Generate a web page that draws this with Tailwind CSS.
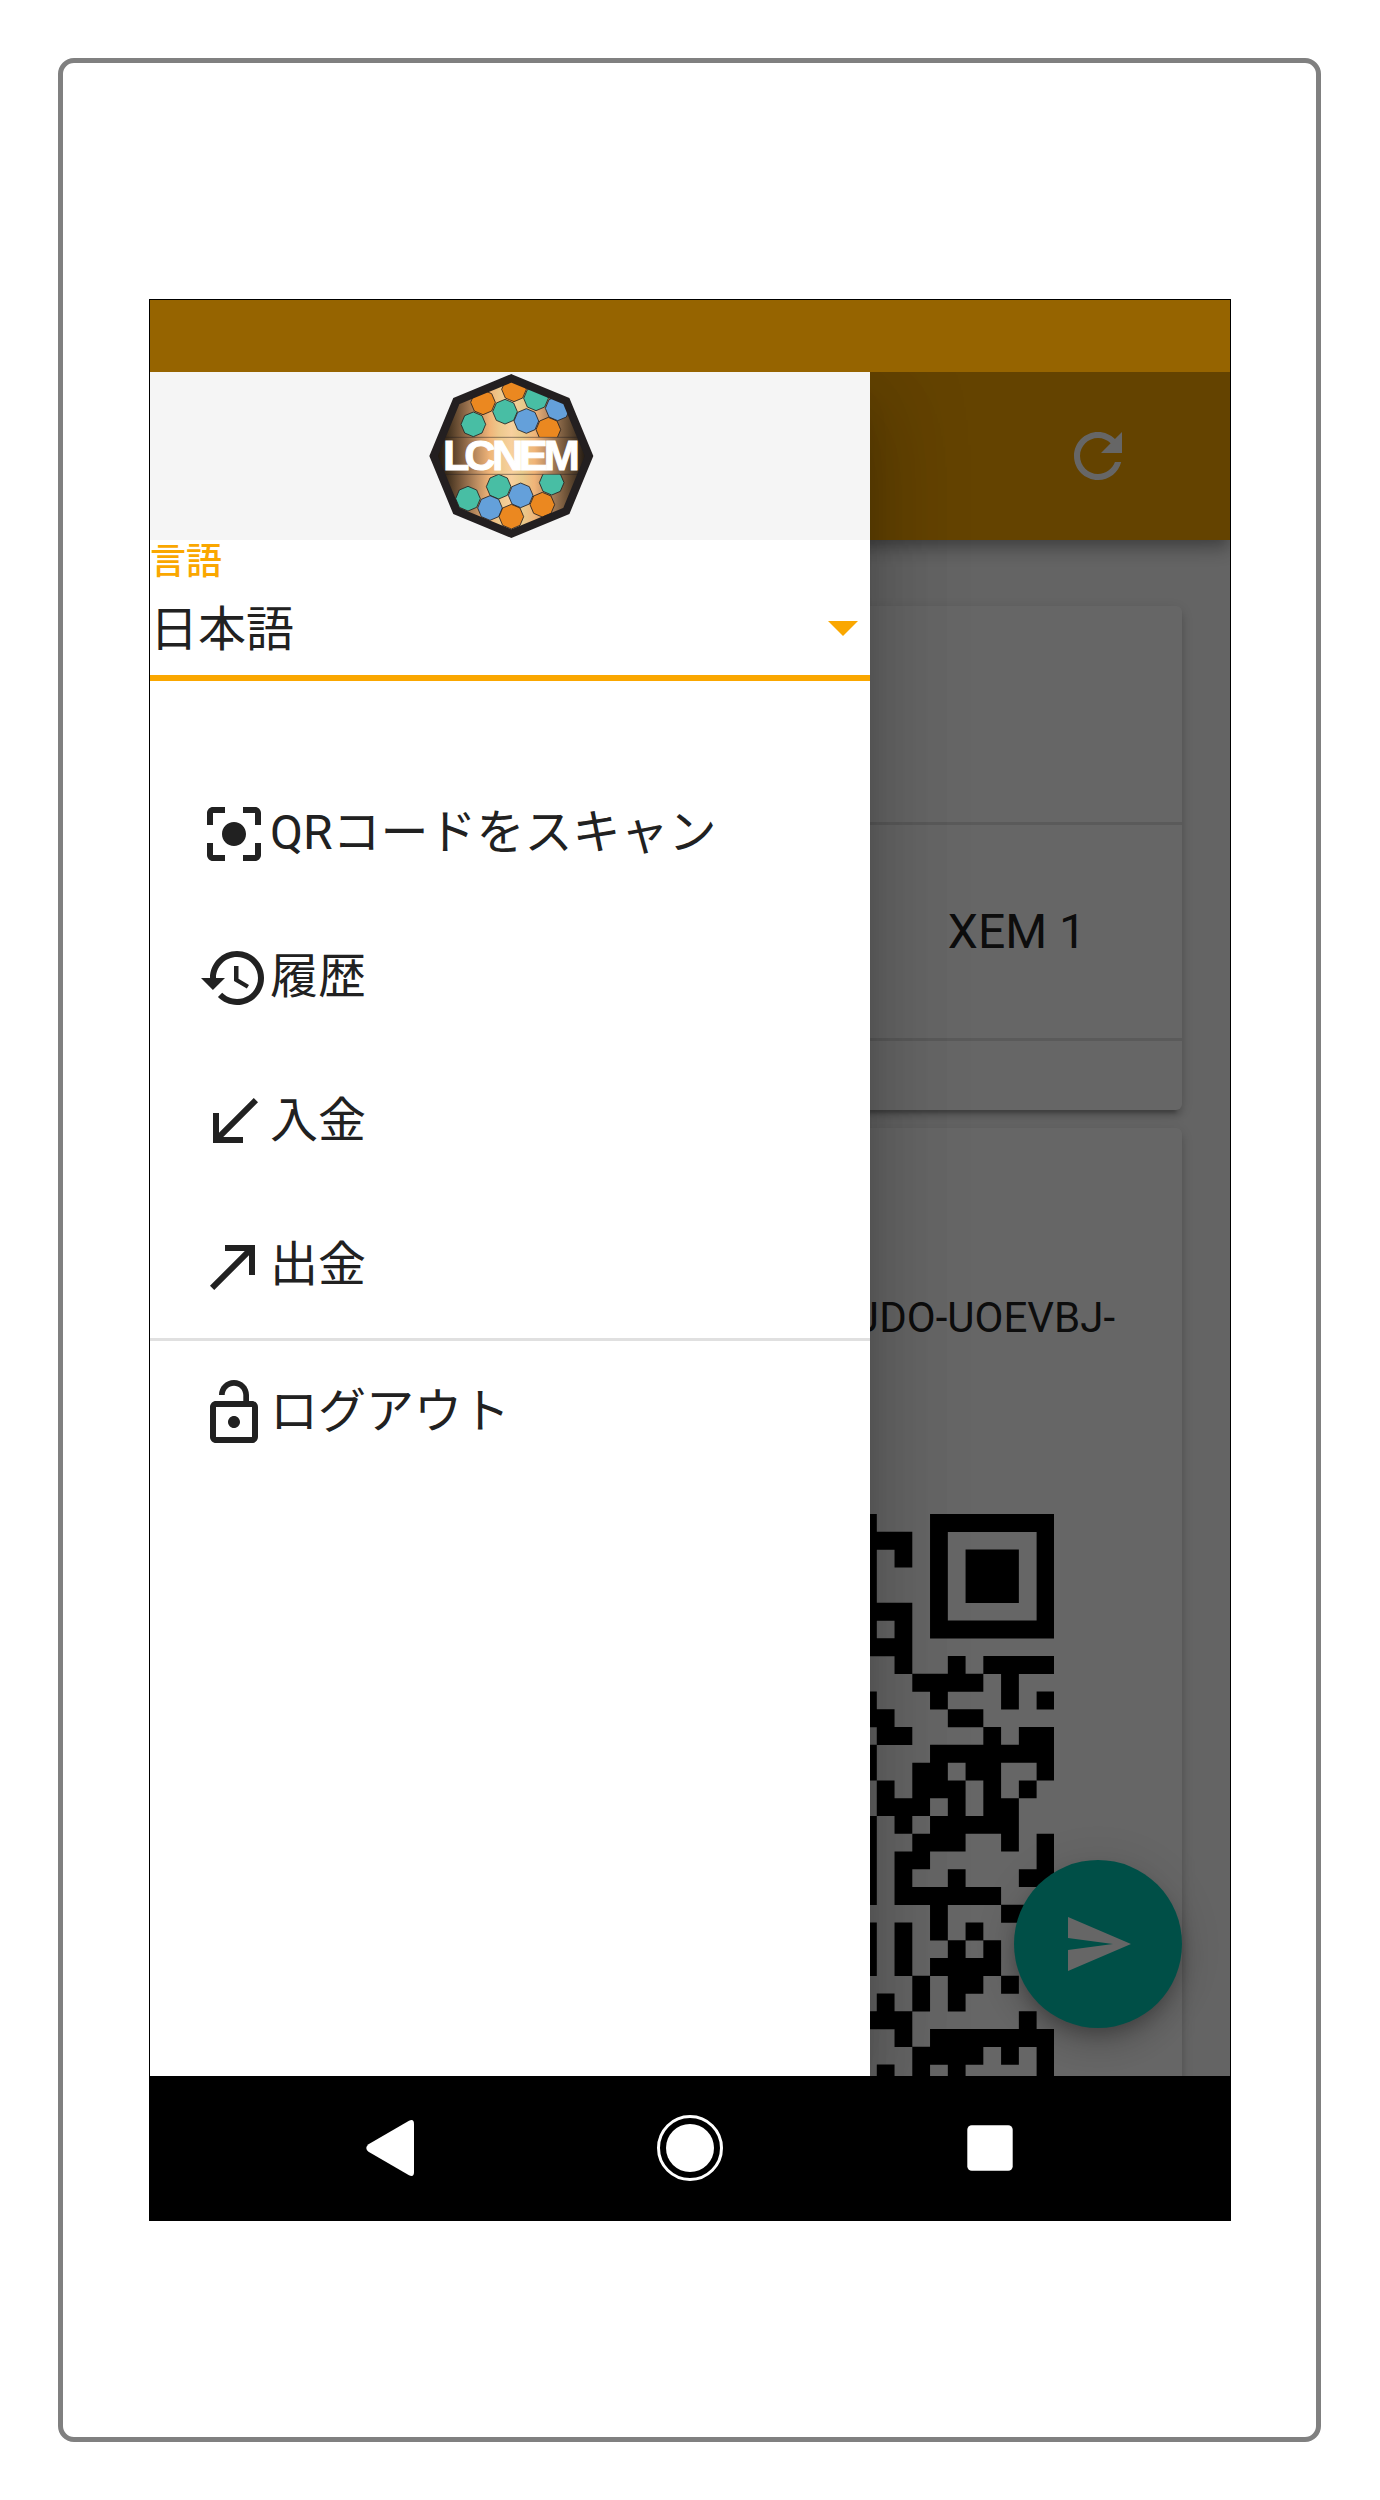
<!DOCTYPE html>
<html lang="ja">
<head>
<meta charset="utf-8">
<title>LCNEM Wallet</title>
<script src="https://cdn.jsdelivr.net/npm/@tailwindcss/browser@4"></script>
</head>
<body class="bg-white font-['Roboto','Noto_Sans_CJK_JP',sans-serif] text-[#212121]">
<div class="h-[2500px] w-[1380px] p-[58px]">
<div class="h-[2384px] w-[1263px] rounded-[16px] border-[5px] border-[#808080] pt-[236px] pl-[86px]">
<div class="flex h-[1922px] w-[1082px] flex-col overflow-hidden border border-black">
  <!-- status bar -->
  <div class="h-[72px] shrink-0 bg-[#966400]"></div>

  <div class="relative h-[1704px] shrink-0 overflow-hidden bg-[#fafafa]">
    <!-- page behind the drawer -->
    <header class="relative flex h-[168px] items-center justify-end bg-[#fba700] pr-24 shadow-[0_6px_12px_-3px_rgba(0,0,0,.2),0_12px_15px_0_rgba(0,0,0,.14),0_3px_30px_0_rgba(0,0,0,.12)]">
      <svg class="size-[72px] fill-white" viewBox="0 0 24 24"><path d="M17.65 6.35C16.2 4.9 14.21 4 12 4c-4.42 0-7.99 3.58-7.99 8s3.57 8 7.99 8c3.73 0 6.84-2.55 7.73-6h-2.08c-.82 2.33-3.04 4-5.65 4-3.31 0-6-2.69-6-6s2.69-6 6-6c1.66 0 3.14.69 4.22 1.78L13 11h7V4l-2.35 2.35z"/></svg>
    </header>
    <main class="flex flex-col gap-[18px] px-12 pt-[66px]">
      <section class="h-[504px] rounded-[6px] bg-white shadow-[0_9px_3px_-6px_rgba(0,0,0,.2),0_6px_6px_0_rgba(0,0,0,.14),0_3px_15px_0_rgba(0,0,0,.12)]">
        <div class="h-[219px] border-b-[3px] border-[#e0e0e0]"></div>
        <div class="flex h-[216px] items-center justify-end border-b-[3px] border-[#e0e0e0] pr-24 text-[48px]">XEM 1</div>
      </section>
      <section class="h-[1200px] rounded-[6px] bg-white pt-[166px] shadow-[0_9px_3px_-6px_rgba(0,0,0,.2),0_6px_6px_0_rgba(0,0,0,.14),0_3px_15px_0_rgba(0,0,0,.12)]">
        <p class="pr-[67px] text-right text-[42px] leading-[48px]">JDO-UOEVBJ-</p>
        <div class="mt-[172px] flex justify-end pr-32"><svg id="qr" class="h-[568.3px] w-[195.4px]" viewBox="0 0 11 32"><path/></svg></div>
      </section>
    </main>
    <button class="absolute right-12 bottom-12 flex size-[168px] items-center justify-center rounded-full bg-[#00c6b2] shadow-[0_9px_15px_-3px_rgba(0,0,0,.2),0_18px_30px_0_rgba(0,0,0,.14),0_3px_54px_0_rgba(0,0,0,.12)]">
      <svg class="size-[72px] fill-white" viewBox="0 0 24 24"><path d="M2.01 21L23 12 2.01 3 2 10l15 2-15 2z"/></svg>
    </button>

    <!-- backdrop -->
    <div class="absolute inset-0 bg-black/60"></div>

    <!-- drawer -->
    <aside class="absolute inset-y-0 left-0 w-[720px] bg-white shadow-[0_24px_30px_-15px_rgba(0,0,0,.2),0_48px_72px_6px_rgba(0,0,0,.14),0_18px_90px_15px_rgba(0,0,0,.12)]">
      <div class="flex h-[168px] justify-center bg-[#f5f5f5]">
        <svg class="size-[168px]" viewBox="48 36 504 504">
          <defs>
            <linearGradient id="gold" gradientUnits="userSpaceOnUse" x1="71" y1="0" x2="537" y2="0">
              <stop offset="0" stop-color="#14100c"/><stop offset=".08" stop-color="#3b2c1a"/>
              <stop offset=".2" stop-color="#8c6746"/><stop offset=".28" stop-color="#bf8f62"/>
              <stop offset=".36" stop-color="#f0b478"/><stop offset=".42" stop-color="#edc88c"/>
              <stop offset=".5" stop-color="#f8d09e"/><stop offset=".57" stop-color="#e9cb8d"/>
              <stop offset=".65" stop-color="#f0b478"/><stop offset=".73" stop-color="#bb8d64"/>
              <stop offset=".86" stop-color="#6a5036"/><stop offset="1" stop-color="#14100c"/>
            </linearGradient>
            <clipPath id="top"><path d="M304 55L469 123L512 232H96L139 123Z"/></clipPath>
            <clipPath id="bot"><path d="M96 343H512L469 453L304 521L139 453Z"/></clipPath>
            <path id="o" d="M0-37L26-26L37 0L26 26L0 37L-26 26L-37 0L-26-26Z"/>
          </defs>
          <path fill="url(#gold)" d="M304 55L469 123L537 288L469 453L304 521L139 453L71 288L139 123Z"/>
          <g clip-path="url(#top)" stroke="#231f20" stroke-width="2.5">
            <g fill="#48bea4"><use href="#o" x="190" y="193"/><use href="#o" x="285" y="155"/><use href="#o" x="378" y="115"/></g>
            <g fill="#eb8820"><use href="#o" x="219" y="127"/><use href="#o" x="312" y="88"/><use href="#o" x="415" y="209"/></g>
            <g fill="#64a0da"><use href="#o" x="349" y="183"/><use href="#o" x="443" y="145"/></g>
          </g>
          <g clip-path="url(#bot)" stroke="#231f20" stroke-width="2.5">
            <g fill="#48bea4"><use href="#o" x="174" y="416"/><use href="#o" x="266" y="380"/><use href="#o" x="425" y="368"/></g>
            <g fill="#64a0da"><use href="#o" x="240" y="444"/><use href="#o" x="332" y="406"/></g>
            <g fill="#eb8820"><use href="#o" x="304" y="470"/><use href="#o" x="397" y="434"/></g>
          </g>
          <path d="M96 232H512M96 343H512" stroke="#231f20" stroke-opacity=".6" stroke-width="2.5"/>
          <path fill="none" stroke="#231f20" stroke-width="24" d="M304 55L469 123L537 288L469 453L304 521L139 453L71 288L139 123Z"/>
          <text x="99 163 246 326 401" y="331" font-family="'Liberation Sans',sans-serif" font-weight="700" font-size="130" fill="#fff" stroke="#fff" stroke-width="3">LCNEM</text>
        </svg>
      </div>
      <div class="flex h-[141px] flex-col border-b-[6px] border-[#faa700]">
        <span class="mt-[2px] text-[36px] leading-[40px] font-medium text-[#faa700]">言語</span>
        <div class="mt-5 flex h-[56px] items-center justify-between pr-3 text-[48px] leading-[56px]">
          <span>日本語</span>
          <svg class="mb-[3px] h-[15px] w-[30px] fill-[#faa700]" viewBox="0 0 10 5"><path d="M0 0h10L5 5z"/></svg>
        </div>
      </div>
      <nav class="pt-[81px] text-[48px] leading-[56px]">
        <a class="flex h-36 items-center px-12"><svg class="size-[72px] fill-[#212121]" viewBox="0 0 24 24"><path d="M12 8c-2.21 0-4 1.79-4 4s1.79 4 4 4 4-1.79 4-4-1.79-4-4-4zm-7 7H3v4c0 1.1.9 2 2 2h4v-2H5v-4zM5 5h4V3H5c-1.1 0-2 .9-2 2v4h2V5zm14-2h-4v2h4v4h2V5c0-1.1-.9-2-2-2zm0 16h-4v2h4c1.1 0 2-.9 2-2v-4h-2v4z"/></svg><span class="pb-[3px]">QRコードをスキャン</span></a>
        <a class="flex h-36 items-center px-12"><svg class="size-[72px] fill-[#212121]" viewBox="0 0 24 24"><path d="M13 3c-4.97 0-9 4.03-9 9H1l3.89 3.89.07.14L9 12H6c0-3.87 3.13-7 7-7s7 3.13 7 7-3.13 7-7 7c-1.93 0-3.68-.79-4.94-2.06l-1.42 1.42C8.27 19.99 10.51 21 13 21c4.97 0 9-4.03 9-9s-4.03-9-9-9zm-1 5v5l4.28 2.54.72-1.21-3.5-2.08V8H12z"/></svg><span class="pb-[3px]">履歴</span></a>
        <a class="flex h-36 items-center px-12"><svg class="size-[72px] fill-[#212121]" viewBox="0 0 24 24"><path d="M20 5.41L18.59 4 7 15.59V9H5v10h10v-2H8.41z"/></svg><span class="pb-[3px]">入金</span></a>
        <a class="flex h-36 items-center px-12"><svg class="size-[72px] fill-[#212121]" viewBox="0 0 24 24"><path d="M9 5v2h6.59L4 18.59 5.41 20 17 8.41V15h2V5z"/></svg><span class="pb-[3px]">出金</span></a>
        <div class="h-[3px] bg-[#e0e0e0]"></div>
        <a class="flex h-36 items-center px-12"><svg class="size-[72px] fill-[#212121]" viewBox="0 0 24 24"><path d="M12 17c1.100 0 2-.9 2-2s-.9-2-2-2-2 .9-2 2 .9 2 2 2zm6-9h-1V6c0-2.760-2.240-5-5-5S7 3.240 7 6h1.900c0-1.710 1.390-3.100 3.100-3.100s3.100 1.390 3.100 3.100v2H6c-1.100 0-2 .9-2 2v10c0 1.100.9 2 2 2h12c1.100 0 2-.9 2-2V10c0-1.100-.9-2-2-2zm0 12H6V10h12v10z"/></svg><span class="pb-[3px]">ログアウト</span></a>
      </nav>
    </aside>
  </div>

  <!-- navigation bar -->
  <div class="flex h-36 shrink-0 items-center justify-center gap-[204px] bg-black">
    <svg class="size-24 fill-white" viewBox="0 0 96 96"><path d="M26.500 44.200L67 20.800Q72 18.500 72 24V72Q72 77.500 67 75.200L26.500 51.800Q22 48 26.500 44.200Z"/></svg>
    <svg class="size-24" viewBox="0 0 96 96"><circle cx="48" cy="48" r="31.500" fill="none" stroke="#fff" stroke-width="3"/><circle cx="48" cy="48" r="24" fill="#fff"/></svg>
    <svg class="size-24 fill-white" viewBox="0 0 96 96"><rect x="25.300" y="25.300" width="45.400" height="45.400" rx="4.500"/></svg>
  </div>
</div>
</div>
</div>
<script>
  const rows = [
    "10001111111","11101000001","10101011101","10001011101","10001011101","11101000001","10101111111","11100000000",
    "00100101111","00011110100","10001000101","11000110000","01100001011","10001111111","10011011001","01011101010",
    "01110101100","10101111100","10011100101","10110000001","10100100011","10111111000","00001000110","10101010000",
    "10100101000","10101111000","00010110100","01010100000","11100000010","00101111111","00011110101","01010100001"];
  let d = "";
  rows.forEach((r, y) => { for (const m of r.matchAll(/1+/g)) d += `M${m.index} ${y}h${m[0].length}v1.010h-${m[0].length}z`; });
  document.querySelector("#qr path").setAttribute("d", d);
</script>
</body>
</html>
